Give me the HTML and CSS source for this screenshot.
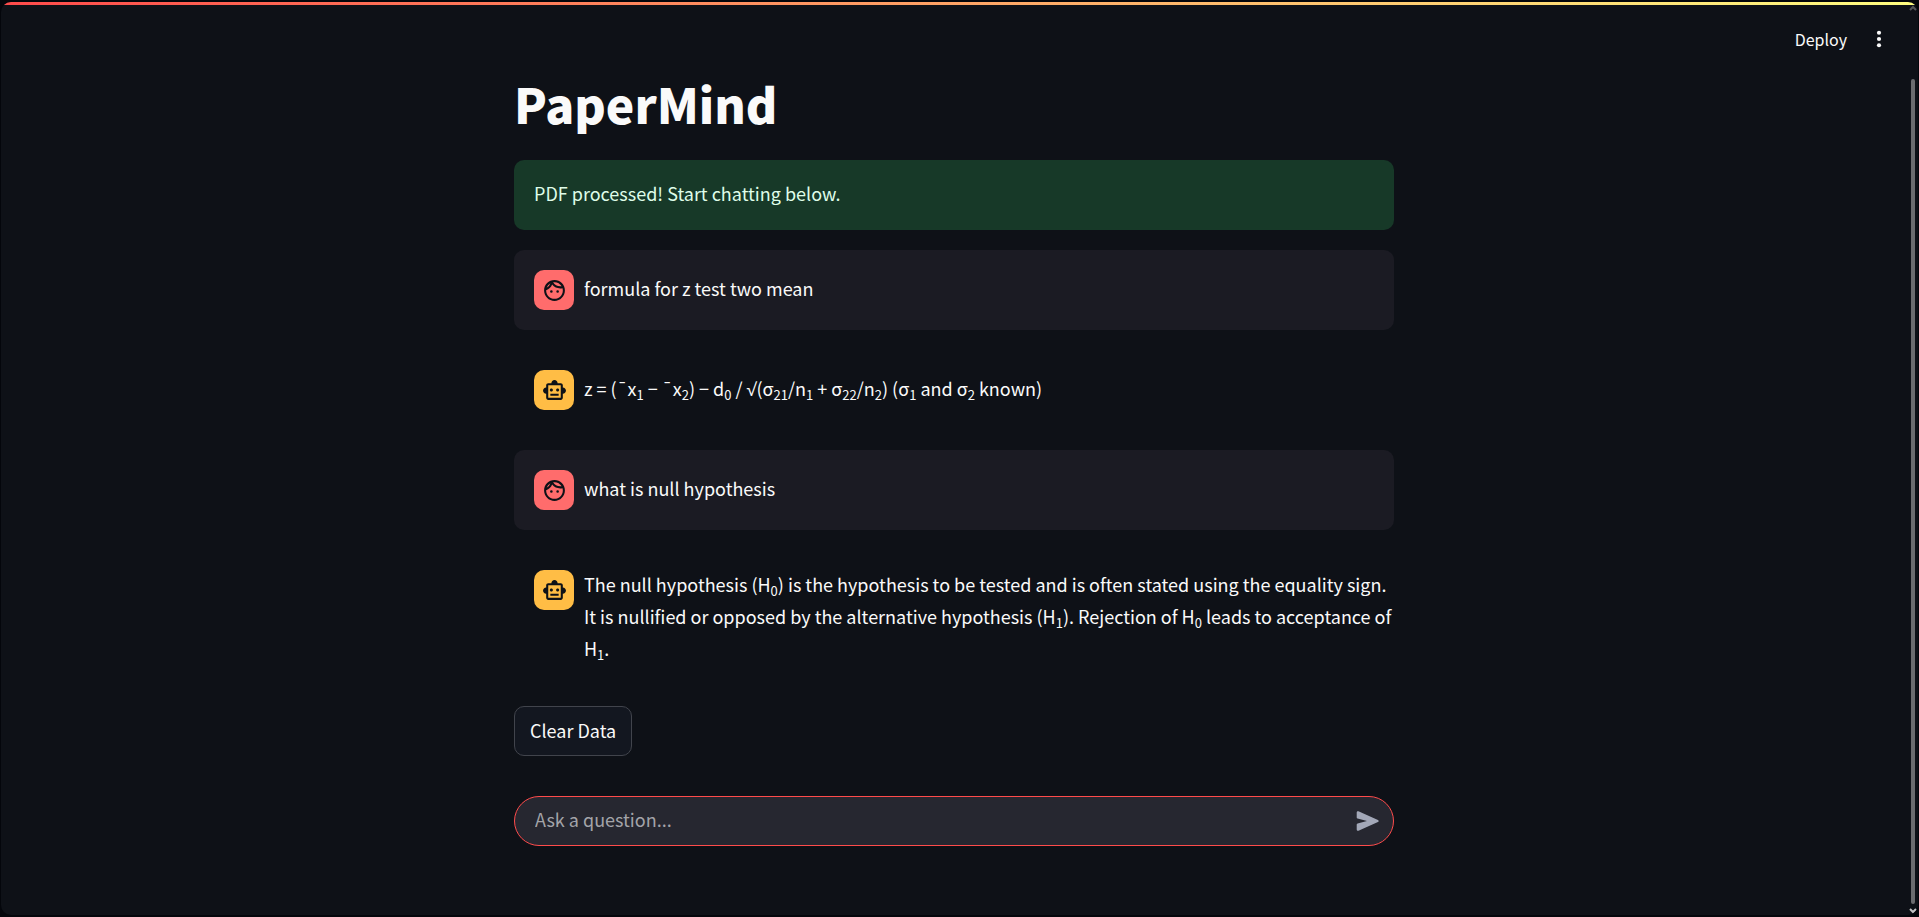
FILE: index.html
```html
<!DOCTYPE html>
<html lang="en">
<head>
<meta charset="utf-8">
<meta name="viewport" content="width=device-width, initial-scale=1">
<title>PaperMind</title>
<link rel="stylesheet" href="styles.css">
</head>
<body>
<svg class="sprite" aria-hidden="true">
  <symbol id="face" viewBox="0 0 24 24"><path d="M10.25 13a1.25 1.25 0 1 1-2.5 0 1.25 1.25 0 0 1 2.5 0zM15 11.75a1.25 1.25 0 1 0 0 2.5 1.25 1.25 0 0 0 0-2.5zM22 12c0 5.52-4.48 10-10 10S2 17.52 2 12 6.48 2 12 2s10 4.48 10 10zM10.66 4.12C12.06 6.44 14.6 8 17.5 8c.46 0 .91-.05 1.34-.12C17.44 5.56 14.9 4 12 4c-.46 0-.91.05-1.34.12zM4.42 9.47a8.046 8.046 0 0 0 3.66-4.44 8.046 8.046 0 0 0-3.66 4.44zM20 12c0-.78-.12-1.53-.33-2.24-.7.15-1.42.24-2.17.24a10 10 0 0 1-7.76-3.69A10.016 10.016 0 0 1 4 11.86c.01.04 0 .09 0 .14 0 4.41 3.59 8 8 8s8-3.59 8-8z"/></symbol>
  <symbol id="robot" viewBox="0 0 24 24"><path d="M20 9V7c0-1.1-.9-2-2-2h-3c0-1.66-1.34-3-3-3S9 3.340 9 5H6c-1.100 0-2 .9-2 2v2c-1.660 0-3 1.340-3 3s1.340 3 3 3v4c0 1.100.9 2 2 2h12c1.100 0 2-.9 2-2v-4c1.660 0 3-1.340 3-3s-1.340-3-3-3zm-2 10H6V7h12v12zm-9-6c-.83 0-1.500-.67-1.500-1.500S8.170 10 9 10s1.500.67 1.500 1.500S9.830 13 9 13zm7.500-1.500c0 .83-.67 1.500-1.500 1.500s-1.500-.67-1.500-1.500.67-1.500 1.500-1.500 1.500.67 1.500 1.500zM8 15h8v2H8v-2z"/></symbol>
</svg>
<div class="app">
  <div class="accent-bar"></div>
  <header class="toolbar">
    <button class="deploy" type="button">Deploy</button>
    <button class="menu" type="button" aria-label="Main menu">
      <svg viewBox="0 0 24 24"><circle cx="12" cy="4.500" r="2.500"/><circle cx="12" cy="12" r="2.500"/><circle cx="12" cy="19.500" r="2.500"/></svg>
    </button>
  </header>
  <main class="content">
    <h1 class="title">PaperMind</h1>
    <p class="alert" role="status">PDF processed! Start chatting below.</p>
    <article class="message message-user">
      <span class="avatar avatar-user"><svg><use href="#face"/></svg></span>
      <p class="message-text">formula for z test two mean</p>
    </article>
    <article class="message">
      <span class="avatar avatar-bot"><svg><use href="#robot"/></svg></span>
      <p class="message-text">z = (¯x<sub>1</sub> − ¯x<sub>2</sub>) − d<sub>0</sub> / <span class="root">√</span>(σ<sub>21</sub>/n<sub>1</sub> + σ<sub>22</sub>/n<sub>2</sub>) (σ<sub>1</sub> and σ<sub>2</sub> known)</p>
    </article>
    <article class="message message-user">
      <span class="avatar avatar-user"><svg><use href="#face"/></svg></span>
      <p class="message-text">what is null hypothesis</p>
    </article>
    <article class="message">
      <span class="avatar avatar-bot"><svg><use href="#robot"/></svg></span>
      <p class="message-text">The null hypothesis (H<sub>0</sub>) is the hypothesis to be tested and is often stated using the equality sign. It is nullified or opposed by the alternative hypothesis (H<sub>1</sub>). Rejection of H<sub>0</sub> leads to acceptance of H<sub>1</sub>.</p>
    </article>
    <button class="clear" type="button">Clear Data</button>
    <form class="chat">
      <input class="chat-input" type="text" placeholder="Ask a question..." aria-label="Ask a question">
      <button class="send" type="button" aria-label="Send message">
        <svg viewBox="0 0 24 24"><path d="M2.500 4.200c0-.9.800-1.400 1.600-1.100l18 7.900c.9.400.9 1.600 0 2l-18 7.900c-.8.300-1.600-.2-1.600-1.100v-4.600c0-.5.300-.9.800-1L12 12 3.300 9.800c-.5-.1-.8-.5-.8-1z"/></svg>
      </button>
    </form>
  </main>
  <div class="scrollbar" aria-hidden="true">
    <svg class="arrow arrow-up" viewBox="0 0 8 6"><path d="M1 5l3-3 3 3"/></svg>
    <span class="thumb"></span>
    <svg class="arrow" viewBox="0 0 8 6"><path d="M1 1l3 3 3-3"/></svg>
  </div>
</div>
</body>
</html>
```

FILE: styles.css
```css
* {
  box-sizing: border-box;
}

body {
  margin: 0;
  min-height: 100vh;
  padding: 2px 1px;
  display: flex;
  background: #04060b;
  color: #fafafa;
  font-family: "Noto Sans CJK SC", "Noto Sans", sans-serif;
  font-size: 18px;
  line-height: 32px;
}

button,
input {
  font: inherit;
  color: inherit;
}

button {
  border: 0;
  background: none;
  cursor: pointer;
}

sub {
  font-size: 13px;
  line-height: 0;
  vertical-align: -4px;
}

.sprite {
  position: absolute;
  width: 0;
  height: 0;
}

.app {
  position: relative;
  flex: 1;
  overflow: hidden;
  padding-right: 11px;
  border-radius: 10px;
  background: #0e1117;
}

.accent-bar {
  height: 3px;
  margin-right: -11px;
  background: linear-gradient(90deg, #ff4b4b, #fffd80);
}

.toolbar {
  display: flex;
  justify-content: flex-end;
  align-items: center;
  gap: 20px;
  height: 68px;
  padding-right: 18px;
}

.deploy {
  padding: 0;
  font-size: 16px;
}

.menu {
  display: flex;
  padding: 0 0 0 2px;
}

.menu svg {
  width: 20px;
  height: 20px;
  fill: #fafafa;
}

.content {
  display: flex;
  flex-direction: column;
  align-items: stretch;
  gap: 20px;
  width: 100%;
  max-width: 880px;
  margin: 0 auto;
  padding-bottom: 40px;
}

.title {
  margin: 0 0 6px;
  font-size: 48px;
  font-weight: 900;
  line-height: 61px;
}

.alert {
  margin: 0;
  padding: 17px 20px 21px;
  border-radius: 10px;
  background: #173928;
  color: #dffde9;
}

.message {
  display: flex;
  align-items: center;
  gap: 10px;
  padding: 20px 0 20px 20px;
  border-radius: 10px;
}

.message-user {
  background: #1b1b23;
}

.avatar {
  flex: none;
  align-self: flex-start;
  display: grid;
  place-items: center;
  width: 40px;
  height: 40px;
  border-radius: 10px;
  color: #0e1117;
}

.avatar svg {
  width: 25px;
  height: 25px;
  fill: currentColor;
}

.avatar-user {
  background: #ff6c6c;
}

.avatar-bot {
  background: #ffbd45;
}

.message-text {
  margin: -2px 0 2px;
}

.root {
  font-family: "Open Sans", "DejaVu Sans", sans-serif;
  line-height: 0;
}

.clear {
  align-self: flex-start;
  height: 50px;
  padding: 0 15px 2px;
  border: 1px solid #41444c;
  border-radius: 10px;
  background: #131720;
}

.chat {
  display: flex;
  align-items: center;
  height: 50px;
  margin-top: 20px;
  padding: 0 13px 0 20px;
  border: 1px solid #ff4b4b;
  border-radius: 25px;
  background: #262730;
}

.chat-input {
  flex: 1;
  min-width: 0;
  padding: 0 0 5px;
  border: 0;
  outline: 0;
  background: none;
}

.chat-input::placeholder {
  color: #a3a4a9;
  opacity: 1;
}

.send {
  display: flex;
  padding: 0;
}

.send svg {
  width: 26px;
  height: 26px;
  fill: #a3a8b8;
}

.scrollbar {
  position: absolute;
  top: 3px;
  right: 1px;
  bottom: 1px;
  display: flex;
  flex-direction: column;
  align-items: center;
  width: 8px;
}

.thumb {
  flex: 1;
  width: 4px;
  margin: 68px 0 4px;
  border-radius: 2px;
  background: #6b6c6f;
}

.arrow {
  width: 8px;
  height: 6px;
  fill: none;
  stroke: #c4c4c6;
  stroke-width: 2;
}

.arrow-up {
  stroke: #55575b;
}
```
